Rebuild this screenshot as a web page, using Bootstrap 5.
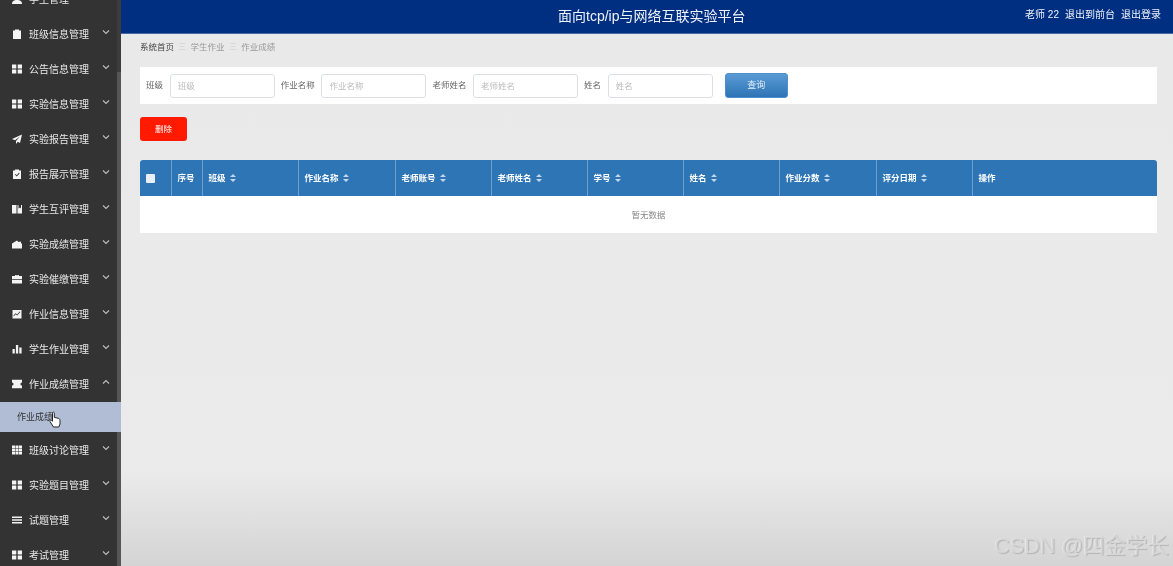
<!DOCTYPE html>
<html lang="zh">
<head>
<meta charset="utf-8">
<title>面向tcp/ip与网络互联实验平台</title>
<link rel="stylesheet" href="https://cdn.jsdelivr.net/npm/bootstrap@5.3.0/dist/css/bootstrap.min.css">
<style>
html,body{height:100%;overflow:hidden}
body{font-family:"Liberation Sans","Noto Sans CJK SC",sans-serif;font-size:9px;color:#555;background:#e9e9e9}
.shell{height:566px;filter:blur(.3px)}
.side{width:121px;background:#333;flex:none;overflow:hidden;position:relative}
.side-track{position:absolute;left:117px;top:0;width:4px;height:566px;background:#3c3c3c}
.side-thumb{position:absolute;left:117px;top:72px;width:4px;height:494px;background:#565656}
.side-list{margin-top:-18.5px;position:relative}
.side-item{height:35px;flex:none;padding:0 14.500px 0 12px;color:#e8e8e8;font-size:10px;gap:7px}
.side-item svg.ic{width:10px;height:10px;fill:#f4f4f4;flex:none}
.side-item .lbl{flex:1;white-space:nowrap}
.side-item svg.chev{width:8px;height:6px;stroke:#bdbdbd;fill:none;stroke-width:1.1;margin-top:-4px;flex:none;margin-right:-3px}
.side-sub{height:30px;flex:none;margin:.5px 0;background:#b0bdd5;color:#333;font-size:9px;padding:1px 0 0 17px;width:121px}
.hand{position:absolute;left:49px;top:411px;width:12px;height:17px}
.topbar{height:34px;background:#002f82;border-bottom:1px solid #44689f;color:#eef2f8;flex:none}
.top-title{font-size:14px;left:558px;margin-left:-121px;position:absolute;line-height:32px}
.top-user{font-size:10px;gap:6px;padding-right:12px;line-height:30px}
.main{position:relative;min-width:0;background:linear-gradient(#e8e9ec 0,#e9e9e9 60px,#ebebeb 470px,#d4d4d4 566px)}
.crumbs{height:33px;padding:0 0 7px 19px;font-size:8.5px;color:#999;gap:4.300px}
.crumbs b{font-weight:400;color:#444}
.crumbs i{font-style:normal;color:#ccc;font-size:8px}
.search-panel{height:37px;margin:0 16px 0 19px;background:#fff;padding-left:6px;font-size:8.5px;color:#666}
.field{width:105px;height:24px;border:1px solid #dcdfe6;border-radius:3px;font-size:8.5px;padding:0 7px;margin:0 6px 0 6.700px;color:#555;background:#fff}
.field::placeholder{color:#bbb}
.query{width:63px;height:25px;margin-left:6px;background:linear-gradient(#5a9bd5,#2e74b5);color:#e8f0f8;border:1px solid #4f8fcb;border-radius:3px;font-size:9px;padding:0}
.del{width:47px;height:24px;margin:13px 0 19px 19px;background:#ff1a00;color:#fff;border:0;border-radius:3px;font-size:8.5px;padding:0;display:block}
.grid-wrap{margin:0 16px 0 19px;background:#fff;border-radius:3px 3px 0 0;overflow:hidden}
.tbl{table-layout:fixed;margin:0;width:1017px;font-size:8.5px}
.tbl th{height:36px;background:#2e75b6;color:#fff;font-weight:700;border:0;border-right:1px solid #6f9fce;padding:0 0 0 6px;vertical-align:middle;white-space:nowrap;box-shadow:none}
.tbl th:last-child{border-right:0}
.tbl td{height:37px;text-align:center;vertical-align:middle;color:#888;border:0;padding:1px 0 0;background:#fff;box-shadow:none}
.chk{width:9px;height:9px;background:#e9eff7;border-radius:1px;display:block}
.sort{width:6px;height:8px;fill:#c6d6ea;margin-left:4px;vertical-align:-1px}
.mark-csdn{position:absolute;right:4px;bottom:8px;font-size:21.500px;line-height:24px;color:#d6d6d6;text-shadow:1px 1px 1px #b4b4b4,-.5px -.5px 0 #f0f0f0;white-space:nowrap}
</style>
</head>
<body>
<svg width="0" height="0" class="d-none">
<symbol id="i-clip" viewBox="0 0 10 10"><path d="M1 1.500h2V.5h4v1h2V10H1z"/></symbol>
<symbol id="i-grid" viewBox="0 0 10 10"><path d="M0 .5h4.300v4H0zM5.700.5H10v4H5.700zM0 5.500h4.300v4H0zM5.700 5.500H10v4H5.700z"/></symbol>
<symbol id="i-plane" viewBox="0 0 10 10"><path d="M10 .5 0 5l3 1.300L8 2.500 4 7v3l1.800-2.200L8 9z"/></symbol>
<symbol id="i-check" viewBox="0 0 10 10"><path fill-rule="evenodd" d="M1 1.500h2V.5h4v1h2V10H1zM2.800 5.600l2 2L7.600 4.400l-.7-.6-2.100 2.400-1.300-1.200z"/></symbol>
<symbol id="i-book" viewBox="0 0 10 10"><path d="M0 1h4.500v8.500H0zM5.500 1H10v8.500H5.500zM6.500 1v3.500L8 3.500l1 1V1z" fill-rule="evenodd"/></symbol>
<symbol id="i-wallet" viewBox="0 0 10 10"><path d="M0 4.500 5 1.500l1.500 1.500L9 2.500V4.500h1V9.500H0z"/></symbol>
<symbol id="i-case" viewBox="0 0 10 10"><path fill-rule="evenodd" d="M3 2V1h4v1h3v3H0V2zM3.800 1.800V2h2.400v-.2zM0 5.800h10V9.500H0z"/></symbol>
<symbol id="i-line" viewBox="0 0 10 10"><path fill-rule="evenodd" d="M.5 1h9v8.500h-9zM1.500 7.500l2.200-2.300 1.500 1.200L8.300 3l-.5-.4-2.700 2.800-1.500-1.200-2.100 2.300z"/></symbol>
<symbol id="i-bars" viewBox="0 0 10 10"><path d="M.5 5h2.300v4.500H.5zM3.900 1h2.300v8.500H3.900zM7.300 3.500h2.300v6H7.300z"/></symbol>
<symbol id="i-ticket" viewBox="0 0 10 10"><path d="M0 .8h10v2.600a1.600 1.600 0 0 0 0 3.200v2.600H0V6.600a1.600 1.600 0 0 0 0-3.200z"/></symbol>
<symbol id="i-table" viewBox="0 0 10 10"><path d="M0 .5h3v2.600H0zM3.500.5h3v2.600h-3zM7 .5h3v2.600H7zM0 3.600h3v2.800H0zM3.500 3.600h3v2.800h-3zM7 3.600h3v2.800H7zM0 6.900h3v2.600H0zM3.500 6.900h3v2.600h-3zM7 6.900h3v2.600H7z"/></symbol>
<symbol id="i-list" viewBox="0 0 10 10"><path d="M0 1.500h10v1.400H0zM0 4.300h10v1.400H0zM0 7.100h10v1.400H0z"/></symbol>
<symbol id="i-user" viewBox="0 0 10 10"><circle cx="5" cy="3" r="2.500"/><path d="M0 10c0-3 2-4 5-4s5 1 5 4z"/></symbol>
<symbol id="i-down" viewBox="0 0 8 6"><path d="M1 1.500 4 4.500 7 1.500"/></symbol>
<symbol id="i-up" viewBox="0 0 8 6"><path d="M1 4.500 4 1.500 7 4.500"/></symbol>
<symbol id="i-sort" viewBox="0 0 6 8"><path d="M3 0 6 3H0zM0 5h6L3 8z"/></symbol>
</svg>

<div class="shell d-flex">
  <nav class="side">
    <div class="side-track"></div>
    <div class="side-thumb"></div>
    <div class="side-list d-flex flex-column">
      <div class="side-item d-flex align-items-center"><svg class="ic"><use href="#i-user"/></svg><span class="lbl">学生管理</span><svg class="chev"><use href="#i-down"/></svg></div>
      <div class="side-item d-flex align-items-center"><svg class="ic"><use href="#i-clip"/></svg><span class="lbl">班级信息管理</span><svg class="chev"><use href="#i-down"/></svg></div>
      <div class="side-item d-flex align-items-center"><svg class="ic"><use href="#i-grid"/></svg><span class="lbl">公告信息管理</span><svg class="chev"><use href="#i-down"/></svg></div>
      <div class="side-item d-flex align-items-center"><svg class="ic"><use href="#i-grid"/></svg><span class="lbl">实验信息管理</span><svg class="chev"><use href="#i-down"/></svg></div>
      <div class="side-item d-flex align-items-center"><svg class="ic"><use href="#i-plane"/></svg><span class="lbl">实验报告管理</span><svg class="chev"><use href="#i-down"/></svg></div>
      <div class="side-item d-flex align-items-center"><svg class="ic"><use href="#i-check"/></svg><span class="lbl">报告展示管理</span><svg class="chev"><use href="#i-down"/></svg></div>
      <div class="side-item d-flex align-items-center"><svg class="ic"><use href="#i-book"/></svg><span class="lbl">学生互评管理</span><svg class="chev"><use href="#i-down"/></svg></div>
      <div class="side-item d-flex align-items-center"><svg class="ic"><use href="#i-wallet"/></svg><span class="lbl">实验成绩管理</span><svg class="chev"><use href="#i-down"/></svg></div>
      <div class="side-item d-flex align-items-center"><svg class="ic"><use href="#i-case"/></svg><span class="lbl">实验催缴管理</span><svg class="chev"><use href="#i-down"/></svg></div>
      <div class="side-item d-flex align-items-center"><svg class="ic"><use href="#i-line"/></svg><span class="lbl">作业信息管理</span><svg class="chev"><use href="#i-down"/></svg></div>
      <div class="side-item d-flex align-items-center"><svg class="ic"><use href="#i-bars"/></svg><span class="lbl">学生作业管理</span><svg class="chev"><use href="#i-down"/></svg></div>
      <div class="side-item d-flex align-items-center"><svg class="ic"><use href="#i-ticket"/></svg><span class="lbl">作业成绩管理</span><svg class="chev"><use href="#i-up"/></svg></div>
      <div class="side-sub d-flex align-items-center">作业成绩</div>
      <div class="side-item d-flex align-items-center"><svg class="ic"><use href="#i-table"/></svg><span class="lbl">班级讨论管理</span><svg class="chev"><use href="#i-down"/></svg></div>
      <div class="side-item d-flex align-items-center"><svg class="ic"><use href="#i-grid"/></svg><span class="lbl">实验题目管理</span><svg class="chev"><use href="#i-down"/></svg></div>
      <div class="side-item d-flex align-items-center"><svg class="ic"><use href="#i-list"/></svg><span class="lbl">试题管理</span><svg class="chev"><use href="#i-down"/></svg></div>
      <div class="side-item d-flex align-items-center"><svg class="ic"><use href="#i-grid"/></svg><span class="lbl">考试管理</span><svg class="chev"><use href="#i-down"/></svg></div>
    </div>
    <svg class="hand" viewBox="0 0 12 17"><path d="M3.500 1.500c.8-.8 1.800-.4 1.800.8v4l4 1c1.300.4 1.700 1 1.700 2.200v3.500L9.800 16H4.500L1 10.500c-.6-1 .6-2 1.500-1.200l1 1V2.300z" fill="#fff" stroke="#222" stroke-width="1"/></svg>
  </nav>
  <div class="flex-grow-1 d-flex flex-column main">
    <header class="topbar d-flex justify-content-end align-items-start">
      <div class="top-title">面向tcp/ip与网络互联实验平台</div>
      <div class="top-user d-flex"><span>老师 22</span><span>退出到前台</span><span>退出登录</span></div>
    </header>
    <div class="crumbs d-flex align-items-center"><b>系统首页</b><i>三</i><span>学生作业</span><i>三</i><span>作业成绩</span></div>
    <form class="search-panel d-flex align-items-center">
      <label>班级</label><input class="field" placeholder="班级">
      <label>作业名称</label><input class="field" placeholder="作业名称">
      <label>老师姓名</label><input class="field" placeholder="老师姓名">
      <label>姓名</label><input class="field" placeholder="姓名">
      <button type="button" class="btn query">查询</button>
    </form>
    <button type="button" class="btn del">删除</button>
    <div class="grid-wrap">
      <table class="table tbl">
        <colgroup><col style="width:31px"><col style="width:31px"><col style="width:96px"><col style="width:97px"><col style="width:96px"><col style="width:96px"><col style="width:96px"><col style="width:96px"><col style="width:97px"><col style="width:96px"><col></colgroup>
        <thead><tr>
          <th><span class="chk"></span></th>
          <th>序号</th>
          <th>班级<svg class="sort"><use href="#i-sort"/></svg></th>
          <th>作业名称<svg class="sort"><use href="#i-sort"/></svg></th>
          <th>老师账号<svg class="sort"><use href="#i-sort"/></svg></th>
          <th>老师姓名<svg class="sort"><use href="#i-sort"/></svg></th>
          <th>学号<svg class="sort"><use href="#i-sort"/></svg></th>
          <th>姓名<svg class="sort"><use href="#i-sort"/></svg></th>
          <th>作业分数<svg class="sort"><use href="#i-sort"/></svg></th>
          <th>评分日期<svg class="sort"><use href="#i-sort"/></svg></th>
          <th>操作</th>
        </tr></thead>
        <tbody><tr><td colspan="11">暂无数据</td></tr></tbody>
      </table>
    </div>
    <div class="mark-csdn">CSDN @四金学长</div>
  </div>
</div>
<script src="https://cdn.jsdelivr.net/npm/bootstrap@5.3.0/dist/js/bootstrap.bundle.min.js"></script>
</body>
</html>
